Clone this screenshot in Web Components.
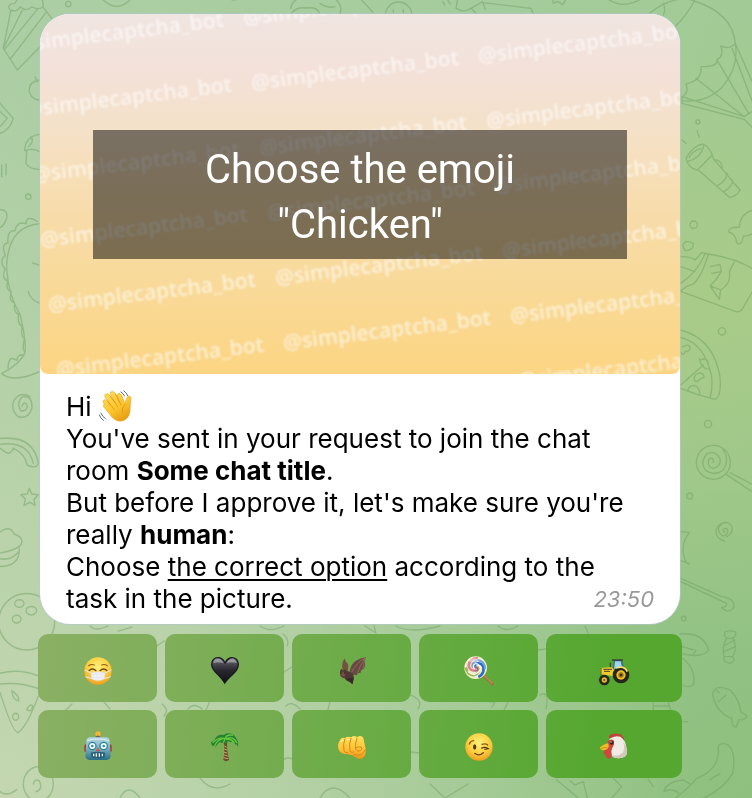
<!DOCTYPE html>
<html lang="en">
<head>
<meta charset="utf-8">
<meta name="viewport" content="width=device-width, initial-scale=1">
<title>Captcha chat</title>
<style>
html, body { margin: 0; min-height: 100%; }
body { font-family: Inter, "Liberation Sans", sans-serif; color: #000; background: #b0cf9c; }
</style>
</head>
<body>
<chat-screen>
  <chat-message time="23:50">
    <captcha-picture slot="media">Choose the emoji "Chicken"</captcha-picture>
    Hi <emoji-glyph name="wave" class="inline"></emoji-glyph><br>
    You've sent in your request to join the chat room <b>Some chat title</b>.<br>
    But before I approve it, let's make sure you're really <b>human</b>:<br>
    Choose <u>the correct option</u> according to the task in the picture.
  </chat-message>
  <emoji-keyboard></emoji-keyboard>
</chat-screen>

<script>
const define = (name, html, setup) => {
  const tpl = document.createElement('template');
  tpl.innerHTML = html;
  customElements.define(name, class extends HTMLElement {
    connectedCallback() {
      if (this.shadowRoot) return;
      this.attachShadow({ mode: 'open' }).append(tpl.content.cloneNode(true));
      if (setup) setup(this, this.shadowRoot);
    }
  });
};

/* Emoji artwork on an 84-unit square. */
const face = id => `<defs><radialGradient id="${id}" cx=".5" cy=".35" r=".68"><stop offset="0" stop-color="#fff07a"/><stop offset=".55" stop-color="#fdd244"/><stop offset="1" stop-color="#ee9a1b"/></radialGradient></defs><circle cx="42" cy="42" r="41" fill="url(#${id})"/>`;
const art = {
  wave: `<defs><linearGradient id="w" x1="0" y1="0" x2=".6" y2="1"><stop offset="0" stop-color="#ffe05a"/><stop offset=".6" stop-color="#fcc62f"/><stop offset="1" stop-color="#e8a016"/></linearGradient></defs>
    <path d="M10 33Q5 25 12 23Q16 22 20 27L29 38L14 17Q10 8 17 7Q22 6 26 12L40 31L28 9Q25 1 32 1Q37 1 40 7L53 31L46 15Q44 6 50 6Q55 7 57 12L66 35Q68 24 70 19Q73 11 79 14Q83 17 81 26Q79 37 79 48Q79 65 68 74Q54 84 39 75Q31 70 24 59L10 42Q7 36 12 35Z" fill="url(#w)" stroke="#e9a21c" stroke-width="1.5"/>
    <path d="M20 27L38 49M26 12L47 42M40 7L56 38M66 35Q56 45 59 57" stroke="#d99316" stroke-width="2" fill="none"/>
    <path d="M54 2Q61 6 65 14M62-1Q70 5 73 13M2 57Q6 67 15 73M-2 62Q1 72 10 78" stroke="#526168" stroke-width="2.4" fill="none"/>`,
  mask: face('m') + `<path d="M14 26Q22 20 31 24M53 24Q62 20 70 26" stroke="#8f5c17" stroke-width="3.5" fill="none" stroke-linecap="round"/>
    <path d="M15 41Q25 31 36 41M48 41Q59 31 69 41" stroke="#68400f" stroke-width="4" fill="none" stroke-linecap="round"/>
    <path d="M2 39L22 48M82 39L62 48M4 59L23 65M80 59L61 65" stroke="#f4ede5" stroke-width="3"/>
    <path d="M21 47Q42 41 63 47L62 66Q42 77 22 66Z" fill="#eef0f5" stroke="#cbc8ca"/><path d="M24 53Q42 49 60 53M24 60Q42 64 60 60" stroke="#d8dbe3" fill="none"/>`,
  heart: `<defs><linearGradient id="h" x2="0" y2="1"><stop offset="0" stop-color="#8a8a91"/><stop offset=".22" stop-color="#4b4a52"/><stop offset=".5" stop-color="#28272e"/><stop offset="1" stop-color="#111115"/></linearGradient></defs>
    <path d="M41 82Q35 70 17 52Q0 36 0 21Q2 1 21 0Q35 0 42 14Q49 0 64 0Q82 2 84 21Q84 38 66 54Q48 70 41 82Z" fill="#1a1920"/><path d="M41 77Q32 62 18 47Q4 34 4 20Q7 4 21 4Q35 5 42 22Q50 5 64 4Q78 6 80 21Q79 36 66 49Q49 64 41 77Z" fill="url(#h)"/><path d="M7 19Q10 5 22 6Q34 8 37 19Q22 12 7 19M48 19Q52 7 63 6Q75 8 77 19Q63 12 48 19" fill="#a7a7ad" opacity=".75"/>`,
  bat: `<path d="M35 42Q40 19 54 11Q69 2 83 1Q80 9 81 17Q83 29 76 36Q68 38 68 47Q59 46 56 55Q46 50 43 57Z" fill="#684a45"/>
    <path d="M80 3Q57 15 40 47M80 4Q65 27 57 53M81 4L75 35" stroke="#a07565" stroke-width="2" fill="none"/>
    <path d="M18 42Q10 35 13 21Q15 7 21 5Q20 12 27 17Q34 23 29 42Z" fill="#755342"/>
    <path d="M6 44L9 35L16 40L24 37L25 42Q39 42 46 54L48 64L43 82L37 75Q25 74 20 64Q7 62 6 51Z" fill="#4f3735"/><path d="M8 47Q15 40 22 47L20 59L11 58Z" fill="#775046"/><path d="M10 48h3M18 48h3" stroke="#181317" stroke-width="3"/><path d="M25 65L43 82L47 62" fill="#39282a"/>`,
  lollipop: `<path d="M56 56L83 82" stroke="#a9693e" stroke-width="7" stroke-linecap="round"/><path d="M56 54L82 80" stroke="#d89e65" stroke-width="3"/>
    <circle cx="32" cy="32" r="34" fill="#f1edcf"/><g fill="none" stroke-width="8">
    <path d="M32 32Q25 20 40 19Q59 20 55 43Q51 55 40 60" stroke="#3169cb"/><path d="M32 32Q45 29 40 45Q29 62 11 49Q4 42 3 31" stroke="#9ab85a"/>
    <path d="M32 32Q31 45 18 38Q3 25 20 9Q28 3 38 4" stroke="#e08289"/><path d="M32 32Q18 33 23 20Q36 2 52 15Q61 25 60 36" stroke="#6aa3dc" stroke-width="6"/>
    <path d="M32 32Q27 41 25 28Q30 13 44 26Q52 42 31 51Q18 54 9 43" stroke="#faf7e1" stroke-width="4"/><path d="M30 34Q35 27 38 35Q39 43 29 42" stroke="#a9559c" stroke-width="4"/></g><ellipse cx="25" cy="10" rx="15" ry="6" fill="#fff" opacity=".45"/>`,
  tractor: `<path d="M39 31L42 9L66 9L72 31L60 43H40Z" fill="#416986"/><path d="M43 29L45 13H62L66 30L55 35H42Z" fill="#9cd5ec"/><path d="M36 9H69" stroke="#353d37" stroke-width="4"/><path d="M31 34V17" stroke="#444a37" stroke-width="4"/>
    <path d="M2 36Q9 30 35 31L43 39L54 31Q77 26 86 43L83 52L42 58L3 52Z" fill="#f1ca2d"/><path d="M10 37L36 37M12 43L30 43" stroke="#414135" stroke-width="3"/><path d="M3 34V57" stroke="#64632c" stroke-width="3"/>
    <circle cx="63" cy="54" r="25" fill="#24271d"/><circle cx="63" cy="54" r="14" fill="#f1bd24"/><circle cx="63" cy="54" r="8" fill="#9b711c"/><circle cx="63" cy="54" r="4" fill="#2c3224"/>
    <circle cx="13" cy="69" r="16" fill="#24271d"/><circle cx="13" cy="69" r="8" fill="#efb721"/><circle cx="13" cy="69" r="3" fill="#594e22"/><path d="M48 33Q73 24 82 44" stroke="#f9df70" stroke-width="5" fill="none"/>`,
  robot: `<defs><linearGradient id="r" x2="0" y2="1"><stop offset="0" stop-color="#b7d8e2"/><stop offset=".5" stop-color="#7aafc1"/><stop offset="1" stop-color="#286e87"/></linearGradient></defs>
    <circle cx="42" cy="3" r="8" fill="#f7b42d"/><path d="M34 12Q42 3 50 12V20H34Z" fill="#735c5c"/><path d="M1 39Q1 33 8 34V57Q0 57 1 51M83 39Q83 33 76 34V57Q84 57 83 51" fill="#a53a36"/>
    <path d="M7 24Q8 13 20 13H64Q76 13 77 24L80 69Q79 80 67 81H17Q5 80 4 69Z" fill="url(#r)"/><path d="M9 23Q42 13 75 23" stroke="#deeff2" stroke-width="3" fill="none"/>
    <g fill="#f6ffff" stroke="#278496" stroke-width="4"><circle cx="25" cy="39" r="11"/><circle cx="59" cy="39" r="11"/></g><circle cx="25" cy="39" r="4" fill="#398da6"/><circle cx="59" cy="39" r="4" fill="#398da6"/>
    <path d="M42 43L49 55H35Z" fill="#d45349"/><path d="M20 59Q42 54 64 59L61 74Q42 77 23 74Z" fill="#286075"/><path d="M29 62V70M37 61V71M46 61V71M55 62V70" stroke="#e5f2f2" stroke-width="4"/>`,
  palm: `<path d="M37 26Q43 43 37 81Q45 88 54 81Q46 48 49 24Z" fill="#6e492b"/><path d="M40 39L47 43M40 48L48 51M38 57L48 60M37 65L50 69M37 74L51 77" stroke="#d0a278" stroke-width="3"/>
    <path d="M43 21Q24 23 13 43Q11 51 12 49L13 36Q2 45 0 27Q12 23 13 16Q22 2 36 6L49 1Q70 1 75 15Q84 26 81 41L75 32Q72 40 70 27Q64 24 58 28Q55 25 48 25L46 36L39 27Q27 34 29 23Z" fill="#268332"/>
    <path d="M41 17Q24 11 5 29M40 16Q18 17 10 42M43 16Q46 3 66 7M45 17Q70 8 78 31M43 16L37 29M45 18Q63 18 70 29" stroke="#65c93b" stroke-width="4" fill="none"/>`,
  fist: `<defs><linearGradient id="f" x2="0" y2="1"><stop stop-color="#ffe15a"/><stop offset=".6" stop-color="#fdbf32"/><stop offset="1" stop-color="#ee931c"/></linearGradient></defs>
    <path d="M5 24Q9 12 21 15Q27 8 40 13Q47 6 57 12Q69 5 76 14L83 48Q84 63 78 72Q69 81 57 76L42 66Q34 67 28 62Q20 66 13 61Q4 58 1 47Q-2 33 5 24Z" fill="url(#f)"/>
    <path d="M21 17Q14 33 18 53Q22 63 30 58M39 15Q32 34 36 54Q41 62 49 56M57 14Q51 31 53 50Q59 57 67 53Q76 48 69 42Q62 40 54 44M46 64Q57 69 68 65Q78 60 82 49" stroke="#d98518" stroke-width="3" fill="none"/><path d="M9 27Q13 18 17 23M27 21Q33 16 35 22M46 18Q51 14 53 20" stroke="#fff09b" stroke-width="4" fill="none"/>`,
  wink: face('k') + `<path d="M13 33Q16 24 26 23M51 34Q62 30 68 36" stroke="#8b5a18" stroke-width="4" fill="none" stroke-linecap="round"/><ellipse cx="29" cy="42" rx="5" ry="8" fill="#593a16"/><path d="M49 46Q59 40 69 47L58 49" stroke="#593a16" stroke-width="4" fill="none"/><path d="M29 61Q42 71 55 59" stroke="#704313" stroke-width="4" fill="none" stroke-linecap="round"/>`,
  chicken: `<path d="M27 14Q26 4 38 4Q46-1 55 3Q67 2 67 11Q75 12 71 25L48 25Z" fill="#bf4539"/><path d="M29 17Q44 6 61 11Q77 21 79 43Q84 63 76 70Q61 80 40 73Q31 67 31 49L24 34Z" fill="#f1ebe5"/><path d="M70 26Q75 42 70 58Q55 72 38 67L40 73Q61 80 76 70Q84 63 79 43Z" fill="#d4c7bd"/>
    <path d="M23 26Q29 17 40 21Q46 32 37 44Q33 51 35 64Q37 76 27 77Q17 75 16 65Q8 62 12 53L20 43Z" fill="#cf4840"/><path d="M0 43Q12 32 24 31Q30 43 20 49Q10 55 0 47Z" fill="#f2bc27"/><path d="M2 46L22 43" stroke="#ba7820" stroke-width="2"/><circle cx="35" cy="29" r="6" fill="#352520"/><circle cx="33" cy="27" r="2" fill="#fff"/>`
};

define('emoji-glyph', `<style>
  :host { display: inline-block; width: 28px; height: 28px; line-height: 0; }
  :host(.inline) { width: 34px; height: 32px; vertical-align: top; }
  svg { width: 100%; height: 100%; overflow: visible; }
</style><svg viewBox="0 0 84 84" aria-hidden="true"></svg>`, (el, root) => {
  root.querySelector('svg').innerHTML = art[el.getAttribute('name')];
});

define('chat-wallpaper', `<style>
  :host { display: block; position: fixed; inset: 0; z-index: -1;
    background: radial-gradient(ellipse at 95% 38%, #a9cb89 0, transparent 48%), radial-gradient(ellipse at 0 100%, #c3d6b0 0, transparent 65%), radial-gradient(ellipse at 100% 100%, #8fc07f 0, transparent 60%), linear-gradient(110deg, #adcea5, #9bc993); }
  svg { width: 100%; height: 100%; display: block; }
</style>
<svg viewBox="0 0 752 798" preserveAspectRatio="xMidYMid slice" fill="none" stroke="#6c9e60" stroke-opacity=".46" stroke-width="4" stroke-linecap="round" stroke-linejoin="round" aria-hidden="true">
<g transform="scale(.3333)">
  <path d="M32 34L10 145L52 210L120 140M30 30Q18 12 45 10Q52-5 62-8M30 30Q52 38 60 20Q80 38 95 20Q115 32 130 20Q130 5 125-5M66 32L12 142M112 28L14 148M138 38L30 178M132 25L156 56"/>
  <circle cx="205" cy="12" r="8"/><path d="M310 0Q350 38 390 0M118 240Q85 245 88 275Q95 300 118 300M105 230L112 246M0 310L40 355Q30 390 0 400M0 335L22 355L0 380"/>
  <path d="M118 403Q75 410 74 452Q100 443 118 455M80 452L78 490Q85 508 118 508M92 410Q105 425 85 440M5 495V530M18 492V525"/><circle cx="85" cy="590" r="8"/>
  <path d="M872 25Q878-2 900-4M875 38Q890 20 920 24Q950 20 958 38M960 10Q985 26 1005 20M1005-5Q1030 20 1020 40M1085 0L1120 38M690-4Q700 4 712-4"/>
</g>
<g transform="translate(376 0) scale(.3333)">
  <circle cx="68" cy="46" r="40"/><path d="M52 30v8M82 30v8M245-5L240 25Q265 40 285 25L320 5L328 28M285 25L300 40M320 8L465 25L472 42M200 5l6 10M215 0l8 12M530-4L532 10L545 4L560 14L568 2M700 0Q740 26 790 0"/>
  <path d="M820 40Q900-20 955 3Q1070 40 1078 130Q1060 150 1035 138Q1045 170 1022 178Q1030 200 975 200Q980 240 930 252Q940 280 918 290V310L1105 358L1128 382M862 10Q870 30 862 45M955 3Q930 50 895 82M1078 130Q1090 200 1040 260Q990 310 918 302M1078 130L1135 260M1068 145L1135 320M1022 178L1118 340M960 235L1105 350M918 290L1105 350L1135 330"/>
  <circle cx="966" cy="366" r="6"/><path d="M963 392L970 412M918 420L930 430"/>
</g>
<g transform="translate(660 130) scale(.3333)">
  <path d="M78 85Q100 45 130 42Q147 50 157 75L112 120Q85 115 78 85ZM84 94Q122 85 132 46M88 82Q98 62 122 56M157 75L160 86L240 180Q230 200 208 202L115 120M162 90Q185 88 187 114M202 130Q197 155 172 167M218 150Q216 172 192 184"/>
  <circle cx="101" cy="284" r="11"/><path d="M280 240Q240 250 238 292Q205 290 206 306Q228 312 230 338Q245 350 250 318Q268 320 280 308"/>
  <path d="M68 345Q75 328 100 340Q102 362 75 362ZM62 380Q90 378 105 390L125 368L145 372Q230 385 280 418M280 480L250 532Q243 548 228 545L62 484M145 372Q125 440 100 462Q80 468 62 482M135 372Q110 430 62 460M62 410L105 425M150 410L180 403L184 425L155 430M184 425Q170 450 150 468L178 508L182 480Q215 460 208 425L222 398M150 468L182 480"/>
  <circle cx="186" cy="604" r="11"/><path d="M62 600Q160 625 180 740Q185 800 165 808Q110 795 62 775M62 622Q135 640 155 740Q158 780 150 803M62 765L130 705M83 782Q90 760 110 770Q122 780 118 795M118 685Q125 720 150 718M122 690Q145 680 145 705M68 650Q90 640 90 655Q88 665 75 665Q70 680 64 668M105 735Q130 720 132 742Q118 745 112 755Q98 755 105 735"/>
  <circle cx="144" cy="882" r="11"/><circle cx="160" cy="997" r="51"/><path d="M160 997Q162 980 148 986Q138 1010 160 1015Q185 1010 180 985Q165 960 140 972Q118 1000 138 1022Q165 1040 190 1020Q210 990 190 960M210 1028L280 1065M200 1034L280 1088"/>
  <circle cx="89" cy="1098" r="9"/><path d="M192 1208Q185 1195 200 1195Q210 1212 190 1218Q170 1210 178 1188Q200 1165 216 1190Q220 1212 200 1220M194 1234Q165 1225 168 1200Q175 1178 198 1178M62 1205L88 1208Q55 1250 80 1300M62 1292L88 1302M62 1345L185 1400Q225 1405 222 1432Q205 1455 185 1432Q202 1432 200 1420L62 1355"/><circle cx="71" cy="1466" r="7"/>
</g>
<g transform="translate(550 630) scale(.3333)">
  <path d="M390 12Q460 5 476 60Q460 85 398 72M398 50L430 60M430 74L438 60M398 85Q440 120 430 165Q415 175 398 165"/>
  <path d="M525 5Q540 0 555 5Q562 15 548 25Q565 50 548 80Q558 95 540 100Q515 95 522 80Q515 50 530 25Q520 15 525 5M530 25H548M526 45L555 30M522 65L556 50M524 80H548M488 190Q500 160 540 180Q570 210 572 245L592 258Q585 270 567 270L558 292Q545 290 545 265Q495 245 488 190M505 215L528 196M500 182L508 188"/>
  <path d="M505 350Q510 335 535 345Q560 370 548 430Q520 480 440 514M505 350Q510 420 440 445Q420 470 370 510M342 484Q350 455 400 450L420 462M480 450Q490 440 510 432M342 484Q370 474 386 490M310 218V240M310 228H360M355 218L362 240M395 275H412M20 450L85 504M60 452L75 465L100 455L112 504M190 445L215 470L180 510M295 448L310 470"/>
</g>
<g transform="translate(0 200) scale(.3333 .3817)">
  <path d="M0 25Q25 25 20 48Q10 70 0 72M118 62Q20 70 20 180Q25 250 60 300Q80 370 75 400Q60 430 5 455Q40 480 118 450M112 56Q80 38 78 62Q50 55 45 80Q20 80 24 112Q2 115 16 145Q-5 160 16 182Q2 205 24 212Q15 235 34 240Q25 265 44 270Q40 295 56 300Q52 325 66 330Q62 360 74 362Q65 390 75 400M72 408Q55 400 50 420Q25 405 24 440M98 165L116 170M85 240Q92 262 118 270"/>
  <path d="M66 540Q72 525 82 538Q82 555 62 552Q48 530 68 515Q98 512 96 545Q85 575 55 568Q30 550 42 525Q60 500 90 515M0 625Q100 615 115 690Q110 705 82 695Q75 665 40 650Q30 670 15 660L0 650M0 640Q85 630 100 690M88 755L95 770L115 772L102 785L105 800L90 792L72 800L76 783L62 772L82 770ZM0 870Q30 850 42 875Q75 885 62 905Q40 920 0 925M58 912Q60 960 0 960M0 940Q35 945 58 920"/>
  <ellipse cx="80" cy="1105" rx="84" ry="74"/><ellipse cx="58" cy="1057" rx="14" ry="10"/><ellipse cx="94" cy="1076" rx="16" ry="11"/><ellipse cx="50" cy="1098" rx="13" ry="10"/>
  <path d="M0 1240Q60 1225 125 1250M0 1268Q60 1262 115 1280M0 1290Q40 1400 55 1395Q80 1380 115 1300M35 1285Q60 1300 55 1312Q38 1310 35 1285M80 1335Q90 1318 98 1325Q95 1345 80 1335M0 1550Q20 1565 50 1545"/><circle cx="47" cy="1354" r="9"/><circle cx="115" cy="1530" r="45"/><path d="M100 1530Q105 1515 118 1522Q130 1545 108 1550"/>
</g>
<path stroke-width="1.3" d="M110 709L104 702M66 710L72 704M157 646L164 641M162 704Q170 710 164 716M188 709Q194 702 202 709M210 701L206 710M284 672L292 667M286 706Q291 700 300 709M330 701L328 710M410 695Q424 700 418 709M411 752L419 753M538 650L546 649M540 695Q550 690 546 709M490 702L495 702L492 707M508 702L504 710M120 798Q128 782 140 798M200 778Q212 794 230 784M283 760Q288 756 292 759M320 798Q332 778 350 798M430 784L445 798L468 784M396 626Q410 634 440 626M365 626L376 633L374 626M498 626Q506 633 518 626M585 626L588 633M90 626Q96 632 108 626M118 631L132 627M260 626Q270 633 284 626M283 634Q290 640 287 646"/>
</svg>`);

define('captcha-picture', `<style>
  :host { display: grid; grid-template: 100% / 100%; aspect-ratio: 16 / 9; overflow: hidden; border-radius: 0 0 8px 8px;
    background: linear-gradient(#f0e5e1, #f3e1da 15%, #f4e1c8 32%, #f7ddb0 50%, #f8da9b 72%, #fcd583); }
  svg, .plate { grid-area: 1 / 1; }
  svg { width: 100%; height: 100%; }
  .marks { filter: blur(1px); }
  .plate { align-self: center; justify-self: center; width: 534px; max-width: 84%; box-sizing: border-box;
    padding: 12px 96px 7px; background: rgba(0,0,0,.5); color: #fff; text-align: center;
    font: 40px/55px Roboto, sans-serif; }
</style>
<svg viewBox="0 0 640 360" preserveAspectRatio="xMidYMid slice" aria-hidden="true" fill="#fff" fill-opacity=".62" font-family="Open Sans, sans-serif" font-weight="600" font-size="21"><g class="marks"></g></svg>
<div class="plate"><slot></slot></div>`, (el, root) => {
  let out = '';
  for (let row = -4; row <= 2; row++)
    for (let col = -1; col <= 2; col++) {
      const x = 9 + 227 * col + 8 * row, y = 298 - 27 * col + 65 * row;
      if (x > 635 || x < -200 || y < 5 || y > 380) continue;
      out += `<text transform="translate(${x} ${y}) rotate(-7)">@simplecaptcha_bot</text>`;
    }
  root.querySelector('.marks').innerHTML = out;
});

define('chat-message', `<style>
  :host { display: block; margin: 0 2px; background: #fff; border-radius: 30px; overflow: hidden; box-shadow: 0 0 0 1px rgba(176,200,210,.6); }
  .body { display: grid; padding: 17px 26px 9px; }
  .text, time { grid-area: 1 / 1; }
  .text { font-size: 26px; line-height: 32px; padding-right: 20px; }
  time { align-self: end; justify-self: end; font-size: 22px; line-height: 32px; font-style: italic; color: #999; }
  ::slotted(u) { text-decoration-thickness: 2px; text-underline-offset: 3px; }
  ::slotted(b) { font-weight: 700; }
</style>
<slot name="media"></slot>
<div class="body"><div class="text"><slot></slot></div><time></time></div>`, (el, root) => {
  root.querySelector('time').textContent = el.getAttribute('time');
});

define('emoji-keyboard', `<style>
  :host { display: grid; grid-template-columns: 119fr 119fr 119fr 119fr 136fr; gap: 8px; }
  button { height: 68px; margin: 0; padding: 10px 0 0; border: 0; border-radius: 10px; cursor: pointer; font: inherit;
    background: linear-gradient(97deg, #90b169 5%, #7eae58 32%, #6fac4a 48%, #61aa3c 66%, #55a730 82%) fixed; }
</style>`, (el, root) => {
  const keys = [['mask', 'Face with medical mask'], ['heart', 'Black heart'], ['bat', 'Bat'], ['lollipop', 'Lollipop'], ['tractor', 'Tractor'],
    ['robot', 'Robot'], ['palm', 'Palm tree'], ['fist', 'Oncoming fist'], ['wink', 'Winking face'], ['chicken', 'Chicken']];
  for (const [name, label] of keys) {
    const b = document.createElement('button');
    b.type = 'button';
    b.setAttribute('aria-label', label);
    b.innerHTML = `<emoji-glyph name="${name}"></emoji-glyph>`;
    root.append(b);
  }
});

define('chat-screen', `<style>
  :host { display: block; }
  main { display: grid; gap: 10px; padding: 14px 70px 20px 38px; }
</style><chat-wallpaper></chat-wallpaper><main><slot></slot></main>`);
</script>
</body>
</html>
